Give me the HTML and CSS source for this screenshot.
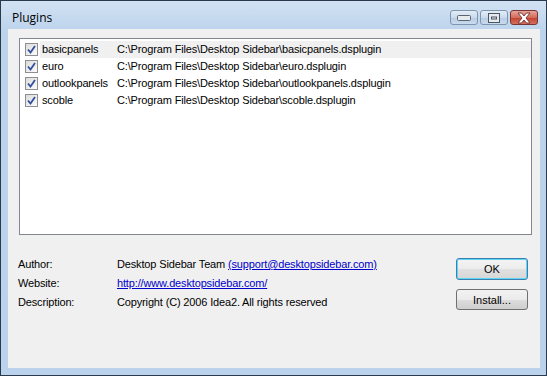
FILE: index.html
```html
<!DOCTYPE html>
<html lang="en">
<head>
  <meta charset="UTF-8">
  <title>Plugins</title>
  <link rel="stylesheet" href="styles.css">
</head>
<body>
  <div class="window">

    <div class="titlebar">
      <div class="title">Plugins</div>
      <div class="caption-btns">
        <div class="cap-btn">
          <svg width="14" height="6" viewBox="0 0 14 6"><rect x="0.5" y="0.5" width="13" height="5" rx="1" fill="#e6e9ee" stroke="#5a6473"/></svg>
        </div>
        <div class="cap-btn">
          <svg width="12" height="10" viewBox="0 0 12 10"><rect x="0.5" y="0.5" width="11" height="9" fill="#e6e9ee" stroke="#4c5563"/><rect x="3" y="3.5" width="6" height="3" fill="#4c5563"/><rect x="4" y="4.5" width="4" height="1" fill="#e6e9ee"/></svg>
        </div>
        <div class="cap-btn close">
          <svg width="16" height="12" viewBox="0 0 16 12"><path d="M2 1 L5.5 1 L8 4 L10.5 1 L14 1 L10 6 L14 11 L10.5 11 L8 8 L5.5 11 L2 11 L6 6 Z" fill="#ffffff" stroke="#6b3030" stroke-width="0.9"/></svg>
        </div>
      </div>
    </div>

    <div class="client">
      <div class="plugin-list">
        <div class="row selected">
          <span class="check"></span>
          <span class="name">basicpanels</span>
          <span class="path">C:\Program Files\Desktop Sidebar\basicpanels.dsplugin</span>
        </div>
        <div class="row">
          <span class="check"></span>
          <span class="name">euro</span>
          <span class="path">C:\Program Files\Desktop Sidebar\euro.dsplugin</span>
        </div>
        <div class="row">
          <span class="check"></span>
          <span class="name">outlookpanels</span>
          <span class="path">C:\Program Files\Desktop Sidebar\outlookpanels.dsplugin</span>
        </div>
        <div class="row">
          <span class="check"></span>
          <span class="name">scoble</span>
          <span class="path">C:\Program Files\Desktop Sidebar\scoble.dsplugin</span>
        </div>
      </div>

      <div class="details">
        <div class="info">
          <div class="label">Author:</div>
          <div class="value">Desktop Sidebar Team <a href="#">(support@desktopsidebar.com)</a></div>
          <div class="label">Website:</div>
          <div class="value"><a href="#">http://www.desktopsidebar.com/</a></div>
          <div class="label">Description:</div>
          <div class="value">Copyright (C) 2006 Idea2. All rights reserved</div>
        </div>
        <div class="buttons">
          <button class="btn default">OK</button>
          <button class="btn">Install...</button>
        </div>
      </div>
    </div>

  </div>
</body>
</html>
```

FILE: styles.css
```css
* { margin: 0; padding: 0; box-sizing: border-box; }
body { width: 547px; height: 376px; overflow: hidden; background: #fff; font-family: "Liberation Sans", Arial, sans-serif; font-size: 11px; letter-spacing: -0.15px; color: #000; }

.window { width: 547px; height: 376px; display: flex; flex-direction: column; border: 1px solid #2a3a4c; background: linear-gradient(#d2e2f3 0, #bcd3ec 30px, #bad2eb 100%); padding: 0 6px 7px 7px; }

.titlebar { height: 28px; display: flex; justify-content: space-between; align-items: flex-start; }
.title { font-family: "Open Sans", "Noto Sans", sans-serif; font-size: 12px; letter-spacing: 0; padding: 8px 0 0 4px; color: #000; }
.caption-btns { display: flex; gap: 2px; padding-top: 9px; margin-right: 2px; }
.cap-btn { width: 28px; height: 15px; border: 1px solid #7f95ae; border-radius: 3px; background: linear-gradient(#e3edf8 0, #cbdbed 50%, #b6cbe3 51%, #c9dbef 100%); display: flex; align-items: center; justify-content: center; }
.cap-btn.close { border-color: #7a3434; background: linear-gradient(#e7a59a 0, #d46c5c 50%, #c2412d 51%, #d4705d 100%); }

.client { flex: 1; background: #f0f0f0; padding: 9px 8px 0 11px; display: flex; flex-direction: column; }

.plugin-list { height: 197px; background: #fff; border: 1px solid #828790; padding-top: 2px; }
.row { height: 17px; display: flex; align-items: center; padding-left: 5px; }
.check { width: 13px; height: 13px; flex-shrink: 0; border: 1px solid #8f8f8f; background: linear-gradient(135deg, #dcdcdc, #fbfbfb); position: relative; }
.check::after { content: ""; position: absolute; left: 1px; top: 1px; width: 9px; height: 9px; background: url("data:image/svg+xml;utf8,<svg xmlns='http://www.w3.org/2000/svg' width='9' height='9' viewBox='0 0 9 9'><path d='M1 4.5 L3.5 7.5 L8 1' fill='none' stroke='%23334f9c' stroke-width='1.8'/></svg>") no-repeat; }
.name { width: 77px; margin-left: 2px; padding-left: 2px; line-height: 17px; flex-shrink: 0; }
.path { flex: 1; line-height: 17px; }
.row.selected .name, .row.selected .path { background: #f0f0f0; }

.details { display: flex; justify-content: space-between; margin-top: 20px; padding-right: 4px; }
.info { display: grid; grid-template-columns: 99px auto; margin-left: -1px; line-height: 19px; }
.info a { color: #0000cc; text-decoration: underline; }
.buttons { display: flex; flex-direction: column; gap: 9px; margin-top: 3px; }
.btn { width: 72px; height: 22px; font-family: inherit; font-size: 11px; color: #000; border: 1px solid #707070; border-radius: 3px; background: linear-gradient(#f2f2f2 0, #ebebeb 50%, #dddddd 51%, #cfcfcf 100%); }
.btn + .btn { height: 21px; }
.btn.default { border-color: #3c7fb1; box-shadow: inset 0 0 0 1px #5fd4f5; background: linear-gradient(#f4f4f4 0, #ececec 50%, #e0e0e0 51%, #d6d6d6 100%); }
```
